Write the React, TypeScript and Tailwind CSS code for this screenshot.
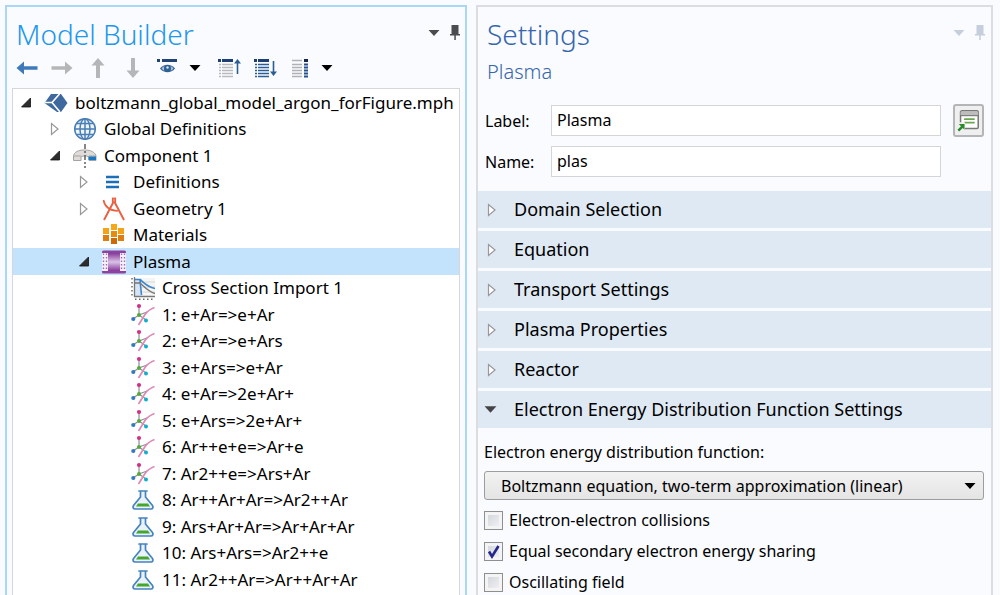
import { useState } from 'react'
import type { ReactNode } from 'react'

type IconName =
  | 'root'
  | 'globe'
  | 'component'
  | 'definitions'
  | 'geometry'
  | 'materials'
  | 'plasma'
  | 'crossSection'
  | 'impact'
  | 'reaction'

interface TreeNode {
  label: string
  icon: IconName
  level: 0 | 1 | 2 | 3
  state?: 'open' | 'closed'
}

const NODES: TreeNode[] = [
  { label: 'boltzmann_global_model_argon_forFigure.mph', icon: 'root', level: 0, state: 'open' },
  { label: 'Global Definitions', icon: 'globe', level: 1, state: 'closed' },
  { label: 'Component 1', icon: 'component', level: 1, state: 'open' },
  { label: 'Definitions', icon: 'definitions', level: 2, state: 'closed' },
  { label: 'Geometry 1', icon: 'geometry', level: 2, state: 'closed' },
  { label: 'Materials', icon: 'materials', level: 2 },
  { label: 'Plasma', icon: 'plasma', level: 2, state: 'open' },
  { label: 'Cross Section Import 1', icon: 'crossSection', level: 3 },
  { label: '1: e+Ar=>e+Ar', icon: 'impact', level: 3 },
  { label: '2: e+Ar=>e+Ars', icon: 'impact', level: 3 },
  { label: '3: e+Ars=>e+Ar', icon: 'impact', level: 3 },
  { label: '4: e+Ar=>2e+Ar+', icon: 'impact', level: 3 },
  { label: '5: e+Ars=>2e+Ar+', icon: 'impact', level: 3 },
  { label: '6: Ar++e+e=>Ar+e', icon: 'impact', level: 3 },
  { label: '7: Ar2++e=>Ars+Ar', icon: 'impact', level: 3 },
  { label: '8: Ar++Ar+Ar=>Ar2++Ar', icon: 'reaction', level: 3 },
  { label: '9: Ars+Ar+Ar=>Ar+Ar+Ar', icon: 'reaction', level: 3 },
  { label: '10: Ars+Ars=>Ar2++e', icon: 'reaction', level: 3 },
  { label: '11: Ar2++Ar=>Ar++Ar+Ar', icon: 'reaction', level: 3 },
]

const INDENT = ['pl-[7px]', 'pl-[36px]', 'pl-[65px]', 'pl-[94px]']

const SECTIONS = ['Domain Selection', 'Equation', 'Transport Settings', 'Plasma Properties', 'Reactor']

const NODE_ICONS: Record<IconName, ReactNode> = {
  root: (
    <>
      <path d="M7 3h10l6.500 9-6.500 9h-4L0.500 12z" fill="#3f689f" />
      <path d="M15.500 3 8 11.500 16 21M1 11.500h7" fill="none" stroke="#fff" strokeWidth="1.600" />
    </>
  ),
  globe: (
    <g fill="none" stroke="#4a7fb5" strokeWidth="1.5">
      <circle cx="12" cy="12" r="10.3" fill="#eef5fb" />
      <ellipse cx="12" cy="12" rx="5" ry="10.3" />
      <path d="M12 1.7v20.6M1.7 12h20.6M3.5 6.5h17M3.5 17.5h17" />
    </g>
  ),
  component: (
    <>
      <path d="M0.5 11.500C2 6.500 8 6 11.500 6s9.500.5 11.500 5.500v5h-7v-3.500c-2-1.500-6-1.500-8 0v3.500h-7.500z" fill="#dedbd9" stroke="#a5a3a2" />
      <path d="M1 12h7M16 12h7" stroke="#a5a3a2" />
      <path d="M15.500 12.500h7.500v3.500h-7.500z" fill="#1b76c4" />
      <path d="M12 0v24" stroke="#555" strokeWidth="1.400" strokeDasharray="5 2 2 2" />
    </>
  ),
  definitions: <path d="M4 7h13M4 12h13M4 17h13" stroke="#1a6fb8" strokeWidth="2.400" />,
  geometry: (
    <g fill="none" stroke="#e8603f" strokeWidth="1.900">
      <path d="M12 4 2 23M12 4l10 19" />
      <path d="M1.500 3c1 6 6 10.500 14.500 11" strokeWidth="1.600" />
      <rect x="10.500" y="1.200" width="3" height="4" fill="#f08a70" strokeWidth="1.200" />
    </g>
  ),
  materials: (
    <>
      <path d="M9 1h6v6H9z" fill="#f5a818" />
      <path d="M1 5h6v6H1z" fill="#f3a21a" />
      <path d="M16 5h6v6h-6z" fill="#f3a21a" />
      <path d="M9 8h6v6H9z" fill="#e88b0c" />
      <path d="M1 12h6v6H1z" fill="#e07d10" />
      <path d="M16 12h6v6h-6z" fill="#e07d10" />
      <path d="M9 15h6v6H9z" fill="#cc6a0a" />
    </>
  ),
  plasma: (
    <>
      <defs>
        <linearGradient id="glow" x1="0" y1="0" x2="0" y2="1">
          <stop offset="0" stopColor="#8b3f9c" />
          <stop offset="0.5" stopColor="#d9c2e6" />
          <stop offset="1" stopColor="#8b3f9c" />
        </linearGradient>
      </defs>
      <rect x="0" y="0.500" width="24" height="23" rx="1.500" fill="#8d429f" />
      <path d="M6 3.500h12v17H6z" fill="url(#glow)" />
      <path d="M0 3h6v18H0zM18 3h6v18h-6z" fill="#f4effa" />
      <path d="M1.500 3.500v17M4.500 3.500v17M19.500 3.500v17M22.500 3.500v17" stroke="#9b6bb4" strokeWidth="1.300" strokeDasharray="1.500 2" />
    </>
  ),
  crossSection: (
    <>
      <path d="M4 2h20v19H4z" fill="#f5f5f5" />
      <path d="M4 6h20M4 11h20M4 16h20" stroke="#d6d6d6" />
      <path d="M4 4h5l2 16H4z" fill="#d5e5f4" />
      <path d="M3.500 1v19.500H24" fill="none" stroke="#777" strokeWidth="1.300" />
      <path d="M1 2v19M4 23.300h20" stroke="#666" strokeWidth="1.400" strokeDasharray="1.500 2.500" />
      <path d="M4 3.500h5c3 2 6 7 15 9M9 4l1.500 15" fill="none" stroke="#3d85cc" strokeWidth="1.600" />
      <path d="M4 7h5c4 3 7 8 15 10.500" fill="none" stroke="#77777a" strokeWidth="1.400" />
    </>
  ),
  impact: (
    <>
      <path d="M8 3v9l-6 4M8 12l7 5M8 12l8-3" fill="none" stroke="#8a8f96" strokeWidth="1.200" />
      <path d="M7.500 22 14 11.500Q17 7 23.500 4.500" fill="none" stroke="#dd8ab8" strokeWidth="1.700" />
      <circle cx="8" cy="3" r="2.100" fill="#d42f87" />
      <circle cx="8" cy="12" r="2" fill="#55a83c" />
      <circle cx="2.300" cy="16" r="2.100" fill="#3478bd" />
      <circle cx="15" cy="17.500" r="2" fill="#12afcd" />
    </>
  ),
  reaction: (
    <>
      <path d="M8 3h8M9.500 3v6L2.500 17.500c-1.200 2 0 3.500 1.500 3.500h16c1.500 0 2.700-1.500 1.500-3.500L14.500 9V3" fill="#e9f1f9" stroke="#4583bf" strokeWidth="1.700" strokeLinejoin="round" strokeLinecap="round" />
      <path d="M7 15.500h10l2 3H5z" fill="#45a52e" />
    </>
  ),
}

function Expander({ state }: { state: 'open' | 'closed' }) {
  return (
    <svg viewBox="0 0 12 14" className="h-[14px] w-[12px]">
      {state === 'open' ? (
        <path d="M10.500 2v9h-9z" fill="#2e2e2e" stroke="#111" strokeWidth="0.800" />
      ) : (
        <path d="M2.500 1.500v11L9 7z" fill="#fff" stroke="#999" strokeWidth="1.200" />
      )}
    </svg>
  )
}

function Caret({ className }: { className: string }) {
  return (
    <svg viewBox="0 0 12 6" className={className} fill="currentColor">
      <path d="M0.500 0h11L6 6z" />
    </svg>
  )
}

function WindowButtons({ className }: { className: string }) {
  return (
    <div className={`flex items-center gap-[10px] ${className}`}>
      <button aria-label="Menu">
        <Caret className="h-[6px] w-[12px]" />
      </button>
      <button aria-label="Pin">
        <svg viewBox="0 0 10 15" className="h-[15px] w-[10px]" fill="currentColor">
          <path d="M1.500 0h7v9H10v1.500H5.800V15H4.300v-4.500H0V9h1.500z" />
        </svg>
      </button>
    </div>
  )
}

function Toolbar() {
  return (
    <div className="flex h-[20px] items-center gap-[13px] pl-[4px]">
      <button aria-label="Previous" className="text-[#3e7ab8]">
        <svg viewBox="0 0 22 20" className="h-[20px] w-[22px]" fill="currentColor">
          <path d="M0.500 10 8 3.500v4.700h13.500v3.600H8v4.700z" />
        </svg>
      </button>
      <button aria-label="Next" className="text-[#b5b6b8]">
        <svg viewBox="0 0 22 20" className="h-[20px] w-[22px]" fill="currentColor">
          <path d="M21.500 10 14 3.500v4.700H0.500v3.600H14v4.700z" />
        </svg>
      </button>
      <button aria-label="Move up" className="text-[#b5b6b8]">
        <svg viewBox="0 0 22 20" className="h-[20px] w-[22px]" fill="currentColor">
          <path d="M12 0l6.500 7.500h-4.500V20h-4V7.500H5.500z" />
        </svg>
      </button>
      <button aria-label="Move down" className="text-[#b5b6b8]">
        <svg viewBox="0 0 22 20" className="h-[20px] w-[22px]" fill="currentColor">
          <path d="M12 20l6.500-7.500h-4.500V0h-4v12.500H5.500z" />
        </svg>
      </button>
      <button aria-label="Show" className="flex w-[46px] items-center gap-[11px]">
        <svg viewBox="0 0 22 20" className="h-[20px] w-[22px]">
          <path d="M1 1h3v3H1zM6 1h15v3H6z" fill="#1f4475" />
          <path d="M4 10.500C8 5.500 15 5.500 19 10.500 15 15.500 8 15.500 4 10.500z" fill="#2f6292" />
          <path d="M5.500 10.500c1-1.500 2-2 3-2.300-.7 1.500-.7 3 0 4.500-1-.3-2-1-3-2.200zM17.500 10.500c-1-1.500-2-2-3-2.300.7 1.500.7 3 0 4.500 1-.3 2-1 3-2.200z" fill="#a8c0d8" />
          <circle cx="11.500" cy="9.500" r="1.200" fill="#dce8f3" />
        </svg>
        <Caret className="h-[6px] w-[12px]" />
      </button>
      <button aria-label="Collapse all">
        <svg viewBox="0 0 26 20" className="h-[20px] w-[26px]">
          <path d="M3 1h3v3H3zM7 1h11v3H7z" fill="#1c3f74" />
          <path d="M4 6.500h2M7 6.500h11M4 9.500h2M7 9.500h11M4 12.500h2M7 12.500h11M4 15.500h2M7 15.500h11M4 18.500h2M7 18.500h11" stroke="#b9babc" strokeWidth="1.500" />
          <path d="M22.500 1l3.500 4.500h-2.700V16h-1.600V5.500H19z" fill="#2b5e94" />
        </svg>
      </button>
      <button aria-label="Expand all">
        <svg viewBox="0 0 24 20" className="h-[20px] w-[24px]">
          <path d="M0 1h3v3H0zM4 1h11v3H4z" fill="#1c3f74" />
          <path d="M1 6.500h2M4 6.500h11M1 9.500h2M4 9.500h11M1 12.500h2M4 12.500h11M1 15.500h2M4 15.500h11M1 18.500h2M4 18.500h11" stroke="#2b5e94" strokeWidth="1.600" />
          <path d="M19.500 18l3.500-4.500h-2.700V3h-1.600v10.500H16z" fill="#2b5e94" />
        </svg>
      </button>
      <button aria-label="Columns" className="flex items-center gap-[12px]">
        <svg viewBox="0 0 18 20" className="h-[20px] w-[18px]">
          <path d="M1 2.500h10M1 6.500h10M1 9.500h10M1 12.500h10M1 15.500h10M1 18.500h10" stroke="#b0b1b3" strokeWidth="1.600" />
          <path d="M13 1h4v3h-4z" fill="#14264f" />
          <path d="M13 6.500h4M13 9.500h4M13 12.500h4M13 15.500h4M13 18.500h4" stroke="#24518a" strokeWidth="2" />
        </svg>
        <Caret className="h-[6px] w-[12px]" />
      </button>
    </div>
  )
}

function ModelBuilder() {
  const [selected, setSelected] = useState('Plasma')

  return (
    <section className="flex flex-col border-2 border-b-0 border-[#abd7f6] px-[5px] pt-[7px]">
      <div className="flex items-start justify-between pl-[4px]">
        <h1 className="text-[28px] leading-[40px] font-light text-[#1f97ee]">Model Builder</h1>
        <WindowButtons className="pt-[11px] text-[#4a4c50]" />
      </div>
      <div className="pt-[4px] pb-[10px]">
        <Toolbar />
      </div>
      <ul role="tree" className="flex-1 border border-b-0 border-[#d5d7da] bg-white text-[17px]">
        {NODES.map((node) => (
          <li
            key={node.label}
            role="treeitem"
            aria-selected={node.label === selected}
            onClick={() => setSelected(node.label)}
            className={`flex items-center whitespace-nowrap odd:h-[27px] even:h-[26px] ${INDENT[node.level]} ${
              node.label === selected ? 'bg-[#c3e2fb]' : ''
            }`}
          >
            <span className="w-[24px] shrink-0">{node.state && <Expander state={node.state} />}</span>
            <svg viewBox="0 0 24 24" className="h-[24px] w-[24px] shrink-0">
              {NODE_ICONS[node.icon]}
            </svg>
            <span className="pl-[7px]">{node.label}</span>
          </li>
        ))}
      </ul>
    </section>
  )
}

function Field({ id, label, value }: { id: string; label: string; value: string }) {
  return (
    <>
      <label htmlFor={id}>{label}</label>
      <input
        id={id}
        defaultValue={value}
        className="h-[31px] w-full min-w-0 border border-[#d3d5d8] bg-white px-[5px] pb-[2px] outline-none"
      />
    </>
  )
}

function Check({ label, checked = false }: { label: string; checked?: boolean }) {
  return (
    <label className="flex items-center gap-[6px]">
      <span className="grid">
        <input
          type="checkbox"
          defaultChecked={checked}
          className="peer col-start-1 row-start-1 h-[19px] w-[19px] appearance-none border border-[#8e8f8f] bg-linear-to-br from-[#cdd1d8] to-[#f6f6f7] shadow-[inset_0_0_0_3px_#f4f4f4]"
        />
        <svg viewBox="0 0 19 19" className="pointer-events-none invisible col-start-1 row-start-1 h-[19px] w-[19px] peer-checked:visible">
          <path d="M5 9.500l3 5L14.500 4" fill="none" stroke="#26268c" strokeWidth="2.600" />
        </svg>
      </span>
      {label}
    </label>
  )
}

function Settings() {
  return (
    <section className="flex flex-col border-2 border-b-0 border-[#dcdde0]">
      <div className="flex items-start justify-between pt-[7px] pr-[6px] pl-[9px]">
        <div className="text-[#3566ad]">
          <h1 className="text-[28px] leading-[40px] font-light">Settings</h1>
          <h2 className="text-[20px] leading-[36px] font-light">Plasma</h2>
        </div>
        <WindowButtons className="pt-[11px] text-[#c6cedb]" />
      </div>

      <div className="flex items-start gap-[12px] pt-[14px] pr-[7px] pb-[14px] pl-[7px]">
        <div className="grid flex-1 grid-cols-[66px_1fr] items-center gap-y-[10px] pt-[1px]">
          <Field id="label" label="Label:" value="Plasma" />
          <Field id="name" label="Name:" value="plas" />
        </div>
        <button aria-label="Create shortcut" className="rounded-[3px] border-2 border-[#b4b5b7] bg-[#efefef] p-[2px]">
          <svg viewBox="0 0 26 26" className="h-[25px] w-[23px]">
            <rect x="4" y="2" width="20" height="20" rx="1.500" fill="#fff" stroke="#777" strokeWidth="1.700" />
            <path d="M4 3h20v4H4z" fill="#bdbdbd" />
            <path d="M4 7.500h20" stroke="#777" strokeWidth="1.300" />
            <path d="M8 11.500h12M8 15.500h12" stroke="#6aa84f" strokeWidth="1.900" />
            <path d="M0 15h9v10H0z" fill="#efefef" />
            <path d="M2 17h6.500v6.500l-2-2L2.500 25.500.500 23.500l4-4z" fill="#2a8a2a" />
          </svg>
        </button>
      </div>

      <div className="flex flex-col gap-[3px]">
        {SECTIONS.map((title) => (
          <button key={title} className="flex h-[37px] items-center bg-[#dfe9f4] pl-[8px] text-left text-[18px]">
            <span className="w-[28px]">
              <Expander state="closed" />
            </span>
            {title}
          </button>
        ))}
        <button className="flex h-[37px] items-center bg-[#dfe9f4] pl-[6px] text-left text-[18px] text-nowrap">
          <span className="w-[30px]">
            <Caret className="h-[7px] w-[13px] text-[#444]" />
          </span>
          Electron Energy Distribution Function Settings
        </button>
      </div>

      <div className="flex flex-col pt-[11px] pr-[7px] pl-[6px]">
        <label htmlFor="eedf" className="leading-[26px]">
          Electron energy distribution function:
        </label>
        <div className="mt-[6px] grid items-center">
          <select
            id="eedf"
            className="col-start-1 row-start-1 h-[29px] w-full appearance-none rounded-[3px] border border-[#9b9da0] bg-linear-to-b from-[#f2f2f2] to-[#e4e4e4] pl-[16px]"
          >
            <option>Boltzmann equation, two-term approximation (linear)</option>
            <option>Boltzmann equation, two-term approximation (quadratic)</option>
            <option>Maxwellian</option>
            <option>Druyvesteyn</option>
          </select>
          <span className="pointer-events-none col-start-1 row-start-1 justify-self-end pr-[8px]">
            <Caret className="h-[6px] w-[12px]" />
          </span>
        </div>
        <div className="flex flex-col gap-[7px] pt-[8px] leading-[24px]">
          <Check label="Electron-electron collisions" />
          <Check label="Equal secondary electron energy sharing" checked />
          <Check label="Oscillating field" />
        </div>
      </div>
    </section>
  )
}

export default function App() {
  return (
    <main className="grid h-screen grid-cols-[462fr_517fr] gap-[9px] overflow-hidden bg-[#fafbff] pt-[5px] pr-[7px] pl-[5px] font-['Noto_Sans','Open_Sans',sans-serif] text-[16px] text-black">
      <ModelBuilder />
      <Settings />
    </main>
  )
}
